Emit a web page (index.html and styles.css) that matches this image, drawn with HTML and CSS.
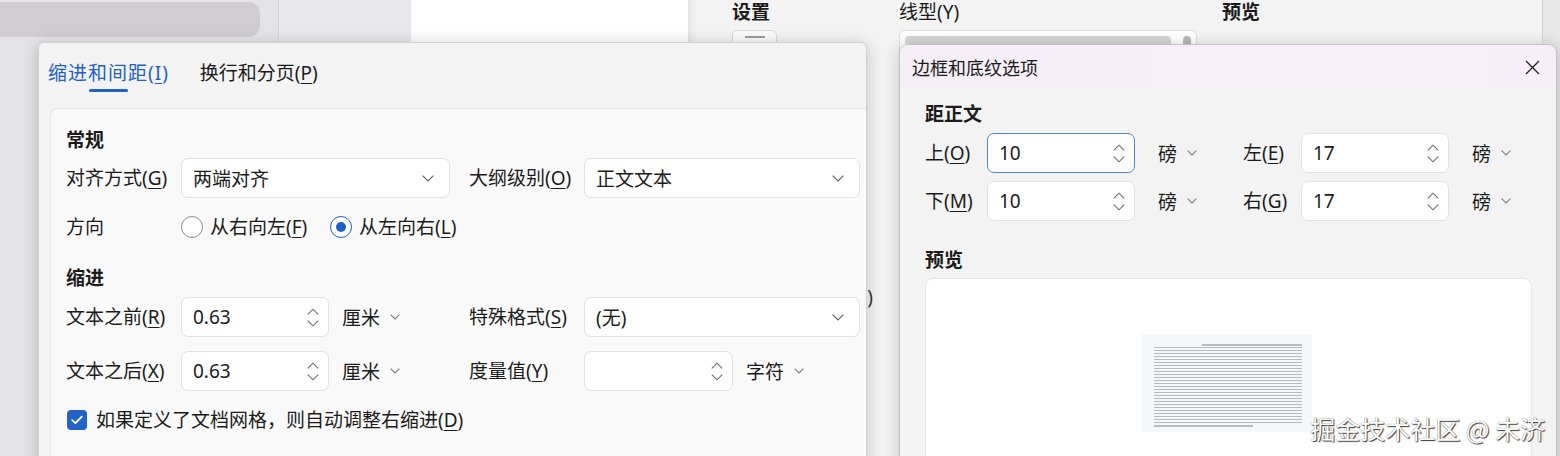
FILE: index.html
```html
<!DOCTYPE html>
<html lang="zh-CN">
<head>
<meta charset="utf-8">
<title>段落 · 边框和底纹选项</title>
<link rel="stylesheet" href="styles.css">
</head>
<body>
<div class="desktop">

  <!-- window contents behind the two dialogs -->
  <div class="backdrop">
    <aside class="nav"><div class="nav-pill"></div></aside>
    <div class="gutter"></div>
    <div class="page"></div>
    <div class="borders-win">
      <div class="bw-col bw-setting">
        <div class="bw-title">设置</div>
        <div class="bw-btn"><span></span></div>
        <div class="bw-hint">)</div>
      </div>
      <div class="bw-col bw-style">
        <div class="bw-label">线型(Y)</div>
        <div class="bw-list"><div class="bw-item"></div><div class="bw-thumb"></div></div>
      </div>
      <div class="bw-col">
        <div class="bw-title">预览</div>
      </div>
    </div>
    <div class="outside"></div>
  </div>

  <!-- paragraph dialog -->
  <section class="dialog para">
    <nav class="tabs">
      <div class="tab active"><span>缩进和间距(<u>I</u>)</span><i class="tab-bar"></i></div>
      <div class="tab"><span>换行和分页(<u>P</u>)</span><i class="tab-bar"></i></div>
    </nav>

    <div class="card">
      <h3 class="group">常规</h3>
      <div class="row r-first">
        <label class="lbl">对齐方式(<u>G</u>)</label>
        <div class="cell">
          <div class="select w-left"><span>两端对齐</span>
            <svg class="chev" width="12" height="7" viewBox="0 0 12 7"><path d="M0.6 0.6 6 6 11.4 0.6" fill="none" stroke="#5e5e5e" stroke-width="1.1"/></svg>
          </div>
        </div>
        <label class="lbl">大纲级别(<u>O</u>)</label>
        <div class="cell">
          <div class="select w-right"><span>正文文本</span>
            <svg class="chev" width="12" height="7" viewBox="0 0 12 7"><path d="M0.6 0.6 6 6 11.4 0.6" fill="none" stroke="#5e5e5e" stroke-width="1.1"/></svg>
          </div>
        </div>
      </div>

      <div class="row r-dir">
        <label class="lbl">方向</label>
        <div class="radios">
          <span class="radio first"><i class="dot"></i><span>从右向左(<u>F</u>)</span></span>
          <span class="radio on"><i class="dot"></i><span>从左向右(<u>L</u>)</span></span>
        </div>
      </div>

      <h3 class="group g-indent">缩进</h3>
      <div class="row r-before">
        <label class="lbl">文本之前(<u>R</u>)</label>
        <div class="cell flex">
          <div class="spin"><span>0.63</span>
            <svg class="arrows" width="12" height="19" viewBox="0 0 12 19"><path d="M0.8 6.4 6 1.2 11.2 6.4M0.8 12.6 6 17.8 11.2 12.6" fill="none" stroke="#6a6a6a" stroke-width="1.1"/></svg>
          </div>
          <span class="unit">厘米<svg width="10" height="6" viewBox="0 0 10 6"><path d="M0.6 0.6 5 5 9.4 0.6" fill="none" stroke="#7a7a7a" stroke-width="1.1"/></svg></span>
        </div>
        <label class="lbl">特殊格式(<u>S</u>)</label>
        <div class="cell">
          <div class="select w-right"><span>(无)</span>
            <svg class="chev" width="12" height="7" viewBox="0 0 12 7"><path d="M0.6 0.6 6 6 11.4 0.6" fill="none" stroke="#5e5e5e" stroke-width="1.1"/></svg>
          </div>
        </div>
      </div>

      <div class="row r-after">
        <label class="lbl">文本之后(<u>X</u>)</label>
        <div class="cell flex">
          <div class="spin"><span>0.63</span>
            <svg class="arrows" width="12" height="19" viewBox="0 0 12 19"><path d="M0.8 6.4 6 1.2 11.2 6.4M0.8 12.6 6 17.8 11.2 12.6" fill="none" stroke="#6a6a6a" stroke-width="1.1"/></svg>
          </div>
          <span class="unit">厘米<svg width="10" height="6" viewBox="0 0 10 6"><path d="M0.6 0.6 5 5 9.4 0.6" fill="none" stroke="#7a7a7a" stroke-width="1.1"/></svg></span>
        </div>
        <label class="lbl">度量值(<u>Y</u>)</label>
        <div class="cell flex">
          <div class="spin w-measure"><span></span>
            <svg class="arrows" width="12" height="19" viewBox="0 0 12 19"><path d="M0.8 6.4 6 1.2 11.2 6.4M0.8 12.6 6 17.8 11.2 12.6" fill="none" stroke="#6a6a6a" stroke-width="1.1"/></svg>
          </div>
          <span class="unit">字符<svg width="10" height="6" viewBox="0 0 10 6"><path d="M0.6 0.6 5 5 9.4 0.6" fill="none" stroke="#7a7a7a" stroke-width="1.1"/></svg></span>
        </div>
      </div>

      <div class="check-row">
        <span class="checkbox"><svg width="12" height="10" viewBox="0 0 12 10"><path d="M1.2 5.2 4.4 8.2 10.8 1.6" fill="none" stroke="#fff" stroke-width="1.8" stroke-linecap="round" stroke-linejoin="round"/></svg></span>
        <span>如果定义了文档网格，则自动调整右缩进(<u>D</u>)</span>
      </div>
    </div>
  </section>

  <!-- border & shading options dialog -->
  <section class="dialog opts">
    <header class="titlebar">
      <span>边框和底纹选项</span>
      <svg class="close" width="15" height="15" viewBox="0 0 15 15"><path d="M1 1 14 14M14 1 1 14" stroke="#202020" stroke-width="1.3"/></svg>
    </header>
    <div class="opts-body">
      <h3 class="group">距正文</h3>
      <div class="o-row o-first">
        <label class="lbl">上(<u>O</u>)</label>
        <div class="spin focus"><span>10</span>
          <svg class="arrows" width="12" height="19" viewBox="0 0 12 19"><path d="M0.8 6.4 6 1.2 11.2 6.4M0.8 12.6 6 17.8 11.2 12.6" fill="none" stroke="#6a6a6a" stroke-width="1.1"/></svg>
        </div>
        <span class="unit wide">磅<svg width="10" height="6" viewBox="0 0 10 6"><path d="M0.6 0.6 5 5 9.4 0.6" fill="none" stroke="#7a7a7a" stroke-width="1.1"/></svg></span>
        <label class="lbl">左(<u>E</u>)</label>
        <div class="spin"><span>17</span>
          <svg class="arrows" width="12" height="19" viewBox="0 0 12 19"><path d="M0.8 6.4 6 1.2 11.2 6.4M0.8 12.6 6 17.8 11.2 12.6" fill="none" stroke="#6a6a6a" stroke-width="1.1"/></svg>
        </div>
        <span class="unit wide">磅<svg width="10" height="6" viewBox="0 0 10 6"><path d="M0.6 0.6 5 5 9.4 0.6" fill="none" stroke="#7a7a7a" stroke-width="1.1"/></svg></span>
      </div>
      <div class="o-row o-second">
        <label class="lbl">下(<u>M</u>)</label>
        <div class="spin"><span>10</span>
          <svg class="arrows" width="12" height="19" viewBox="0 0 12 19"><path d="M0.8 6.4 6 1.2 11.2 6.4M0.8 12.6 6 17.8 11.2 12.6" fill="none" stroke="#6a6a6a" stroke-width="1.1"/></svg>
        </div>
        <span class="unit wide">磅<svg width="10" height="6" viewBox="0 0 10 6"><path d="M0.6 0.6 5 5 9.4 0.6" fill="none" stroke="#7a7a7a" stroke-width="1.1"/></svg></span>
        <label class="lbl">右(<u>G</u>)</label>
        <div class="spin"><span>17</span>
          <svg class="arrows" width="12" height="19" viewBox="0 0 12 19"><path d="M0.8 6.4 6 1.2 11.2 6.4M0.8 12.6 6 17.8 11.2 12.6" fill="none" stroke="#6a6a6a" stroke-width="1.1"/></svg>
        </div>
        <span class="unit wide">磅<svg width="10" height="6" viewBox="0 0 10 6"><path d="M0.6 0.6 5 5 9.4 0.6" fill="none" stroke="#7a7a7a" stroke-width="1.1"/></svg></span>
      </div>

      <h3 class="group g-preview">预览</h3>
      <div class="preview">
        <div class="thumb">
          <div class="ln ln-first"></div>
          <div class="ln-block"></div>
          <div class="ln ln-last"></div>
        </div>
      </div>
    </div>
  </section>

  <div class="watermark">掘金技术社区 @ 未济</div>
</div>
</body>
</html>
```

FILE: styles.css
```css
* { box-sizing: border-box; }

html, body {
  margin: 0;
  padding: 0;
}

body {
  width: 1560px;
  height: 456px;
  overflow: hidden;
  background: #e4e3e8;
  font-family: "Noto Sans", "Noto Sans CJK SC", sans-serif;
  font-size: 19px;
  color: #1b1b1b;
}

u {
  text-decoration-thickness: 1px;
  text-underline-offset: 3px;
}

.desktop {
  position: relative;
  width: 1560px;
  height: 456px;
  overflow: hidden;
}

/* ---------- backdrop window ---------- */
.backdrop {
  display: flex;
  height: 100%;
}

.nav {
  width: 279px;
  padding-top: 2px;
  background: #e4e3e8;
  border-right: 1px solid #d4d3d8;
}

.nav-pill {
  width: 260px;
  height: 35px;
  background: #cfcdd2;
  border-radius: 0 12px 12px 0;
}

.gutter {
  width: 132px;
  background: #e8e7eb;
}

.page {
  width: 277px;
  background: #ffffff;
}

.borders-win {
  width: 855px;
  display: flex;
  padding-left: 44px;
  background: #f3f3f3;
  border-right: 1px solid #d6d6d6;
  box-shadow: inset 7px 0 8px -7px rgba(0, 0, 0, 0.14);
}

.outside {
  flex: 1;
  background: #e7e7e7;
}

.bw-col {
  display: flex;
  flex-direction: column;
}

.bw-setting { width: 167px; }
.bw-style { width: 323px; }

.bw-title {
  font-weight: 700;
  line-height: 24px;
}

.bw-label {
  line-height: 24px;
}

.bw-btn {
  margin-top: 6px;
  width: 45px;
  height: 34px;
  display: flex;
  justify-content: center;
  padding-top: 5px;
  background: #fbfbfb;
  border: 1px solid #d8d8d8;
  border-radius: 5px;
}

.bw-btn span {
  width: 20px;
  height: 2px;
  background: #9c9c9c;
}

.bw-hint {
  margin-top: 220px;
  padding-right: 26px;
  text-align: right;
  line-height: 26px;
  color: #333;
}

.bw-list {
  margin-top: 6px;
  width: 298px;
  height: 60px;
  display: flex;
  gap: 12px;
  padding: 5px 5px;
  background: #fff;
  border: 1px solid #dcdcdc;
  border-radius: 6px;
}

.bw-item {
  flex: 1;
  height: 22px;
  background: #d6d6d6;
  border-radius: 4px;
}

.bw-thumb {
  width: 8px;
  height: 30px;
  background: #b8b8b8;
  border-radius: 4px;
}

/* ---------- shared dialog pieces ---------- */
.dialog {
  position: absolute;
  background: #f3f3f3;
  border: 1px solid #d2d2d2;
  box-shadow: 0 2px 16px rgba(0, 0, 0, 0.2);
}

.group {
  margin: 0;
  font-size: 19px;
  font-weight: 700;
  line-height: 26px;
}

.lbl {
  line-height: 26px;
  white-space: nowrap;
}

.select,
.spin {
  height: 40px;
  display: flex;
  align-items: center;
  justify-content: space-between;
  background: #ffffff;
  border: 1px solid #e1e1e1;
  border-radius: 7px;
  white-space: nowrap;
}

.select {
  padding: 0 15px 0 11px;
}

.spin {
  width: 148px;
  padding: 0 9px 0 11px;
}

.spin.focus {
  border-color: #4f86d4;
}

.unit {
  display: flex;
  align-items: center;
  gap: 10px;
  margin-left: 13px;
  white-space: nowrap;
}

.unit.wide {
  margin-left: 23px;
}

/* ---------- paragraph dialog ---------- */
.para {
  left: 38px;
  top: 42px;
  width: 829px;
  height: 440px;
  border-radius: 6px 6px 0 0;
}

.tabs {
  display: flex;
  gap: 31px;
  padding: 17px 0 0 9px;
}

.tab {
  display: flex;
  flex-direction: column;
  align-items: center;
  line-height: 26px;
}

.tab.active {
  color: #2160c4;
}

.tab.active span {
  letter-spacing: 1px;
}

.tab-bar {
  width: 39px;
  height: 3px;
  margin-top: 3px;
  border-radius: 2px;
  background: #2160c4;
}

.tab:not(.active) .tab-bar {
  visibility: hidden;
}

.card {
  height: 380px;
  margin: 16px 0 0 11px;
  padding: 18px 6px 0 15px;
  background: #f9f9f9;
  border-top: 1px solid #e6e6e6;
  border-left: 1px solid #e6e6e6;
  border-radius: 8px 0 0 0;
}

.row {
  display: grid;
  grid-template-columns: 115px 288px 115px 276px;
  align-items: center;
}

.cell.flex {
  display: flex;
  align-items: center;
}

.w-left { width: 269px; }
.w-right { width: 276px; }
.spin.w-measure { width: 149px; }

.r-first { margin-top: 5px; }
.r-dir { margin-top: 9px; height: 40px; }
.g-indent { margin-top: 18px; }
.r-before { margin-top: 6px; }
.r-after { margin-top: 14px; }

.radios {
  grid-column: 2 / 5;
  display: flex;
  align-items: center;
}

.radio {
  display: flex;
  align-items: center;
  gap: 7px;
  line-height: 26px;
  white-space: nowrap;
}

.radio.first {
  width: 149px;
}

.radio .dot {
  width: 22px;
  height: 22px;
  display: flex;
  align-items: center;
  justify-content: center;
  border: 1px solid #8a8a8a;
  border-radius: 50%;
  background: #fff;
}

.radio.on .dot {
  border: 1.5px solid #2160c4;
}

.radio.on .dot::after {
  content: "";
  width: 10px;
  height: 10px;
  border-radius: 50%;
  background: #2160c4;
}

.check-row {
  display: flex;
  align-items: center;
  gap: 9px;
  margin-top: 16px;
  padding-left: 1px;
  line-height: 26px;
}

.checkbox {
  width: 20px;
  height: 20px;
  display: flex;
  align-items: center;
  justify-content: center;
  background: #2462c6;
  border-radius: 4px;
}

/* ---------- border options dialog ---------- */
.opts {
  left: 899px;
  top: 44px;
  width: 658px;
  height: 430px;
  border-color: #c2c2c2;
  border-radius: 9px 9px 0 0;
}

.titlebar {
  height: 44px;
  display: flex;
  align-items: center;
  justify-content: space-between;
  padding: 0 16px 0 12px;
  font-size: 18px;
  background: linear-gradient(90deg, #f5eef6 0%, #f9eff9 55%, #f6eff9 100%);
  border-radius: 8px 8px 0 0;
}

.opts-body {
  padding: 12px 0 0 25px;
}

.o-row {
  display: grid;
  grid-template-columns: 62px 148px 108px 58px 148px auto;
  align-items: center;
}

.o-first { margin-top: 6px; }
.o-second { margin-top: 8px; }
.g-preview { margin-top: 26px; }

.preview {
  width: 607px;
  height: 200px;
  margin-top: 5px;
  display: flex;
  justify-content: center;
  padding-top: 55px;
  background: #ffffff;
  border: 1px solid #e6e6e6;
  border-radius: 8px;
}

.thumb {
  width: 170px;
  height: 98px;
  margin-left: -3px;
  padding: 10px 10px 0 12px;
  background: #f5f8fb;
}

.ln {
  height: 1.5px;
  background: #b8babe;
}

.ln-first {
  margin-left: 48px;
}

.ln-block {
  height: 78px;
  margin-top: 1.5px;
  background: repeating-linear-gradient(180deg, #b8babe 0 1.5px, transparent 1.5px 3px);
}

.ln-last {
  width: 99px;
}

/* ---------- watermark ---------- */
.watermark {
  position: absolute;
  right: 15px;
  bottom: 13px;
  font-family: "Noto Sans CJK SC", sans-serif;
  font-size: 25px;
  line-height: 30px;
  color: #ffffff;
  text-shadow: 1px 1px 1px #3a3a3a, 0 0 1px #555;
}
```
